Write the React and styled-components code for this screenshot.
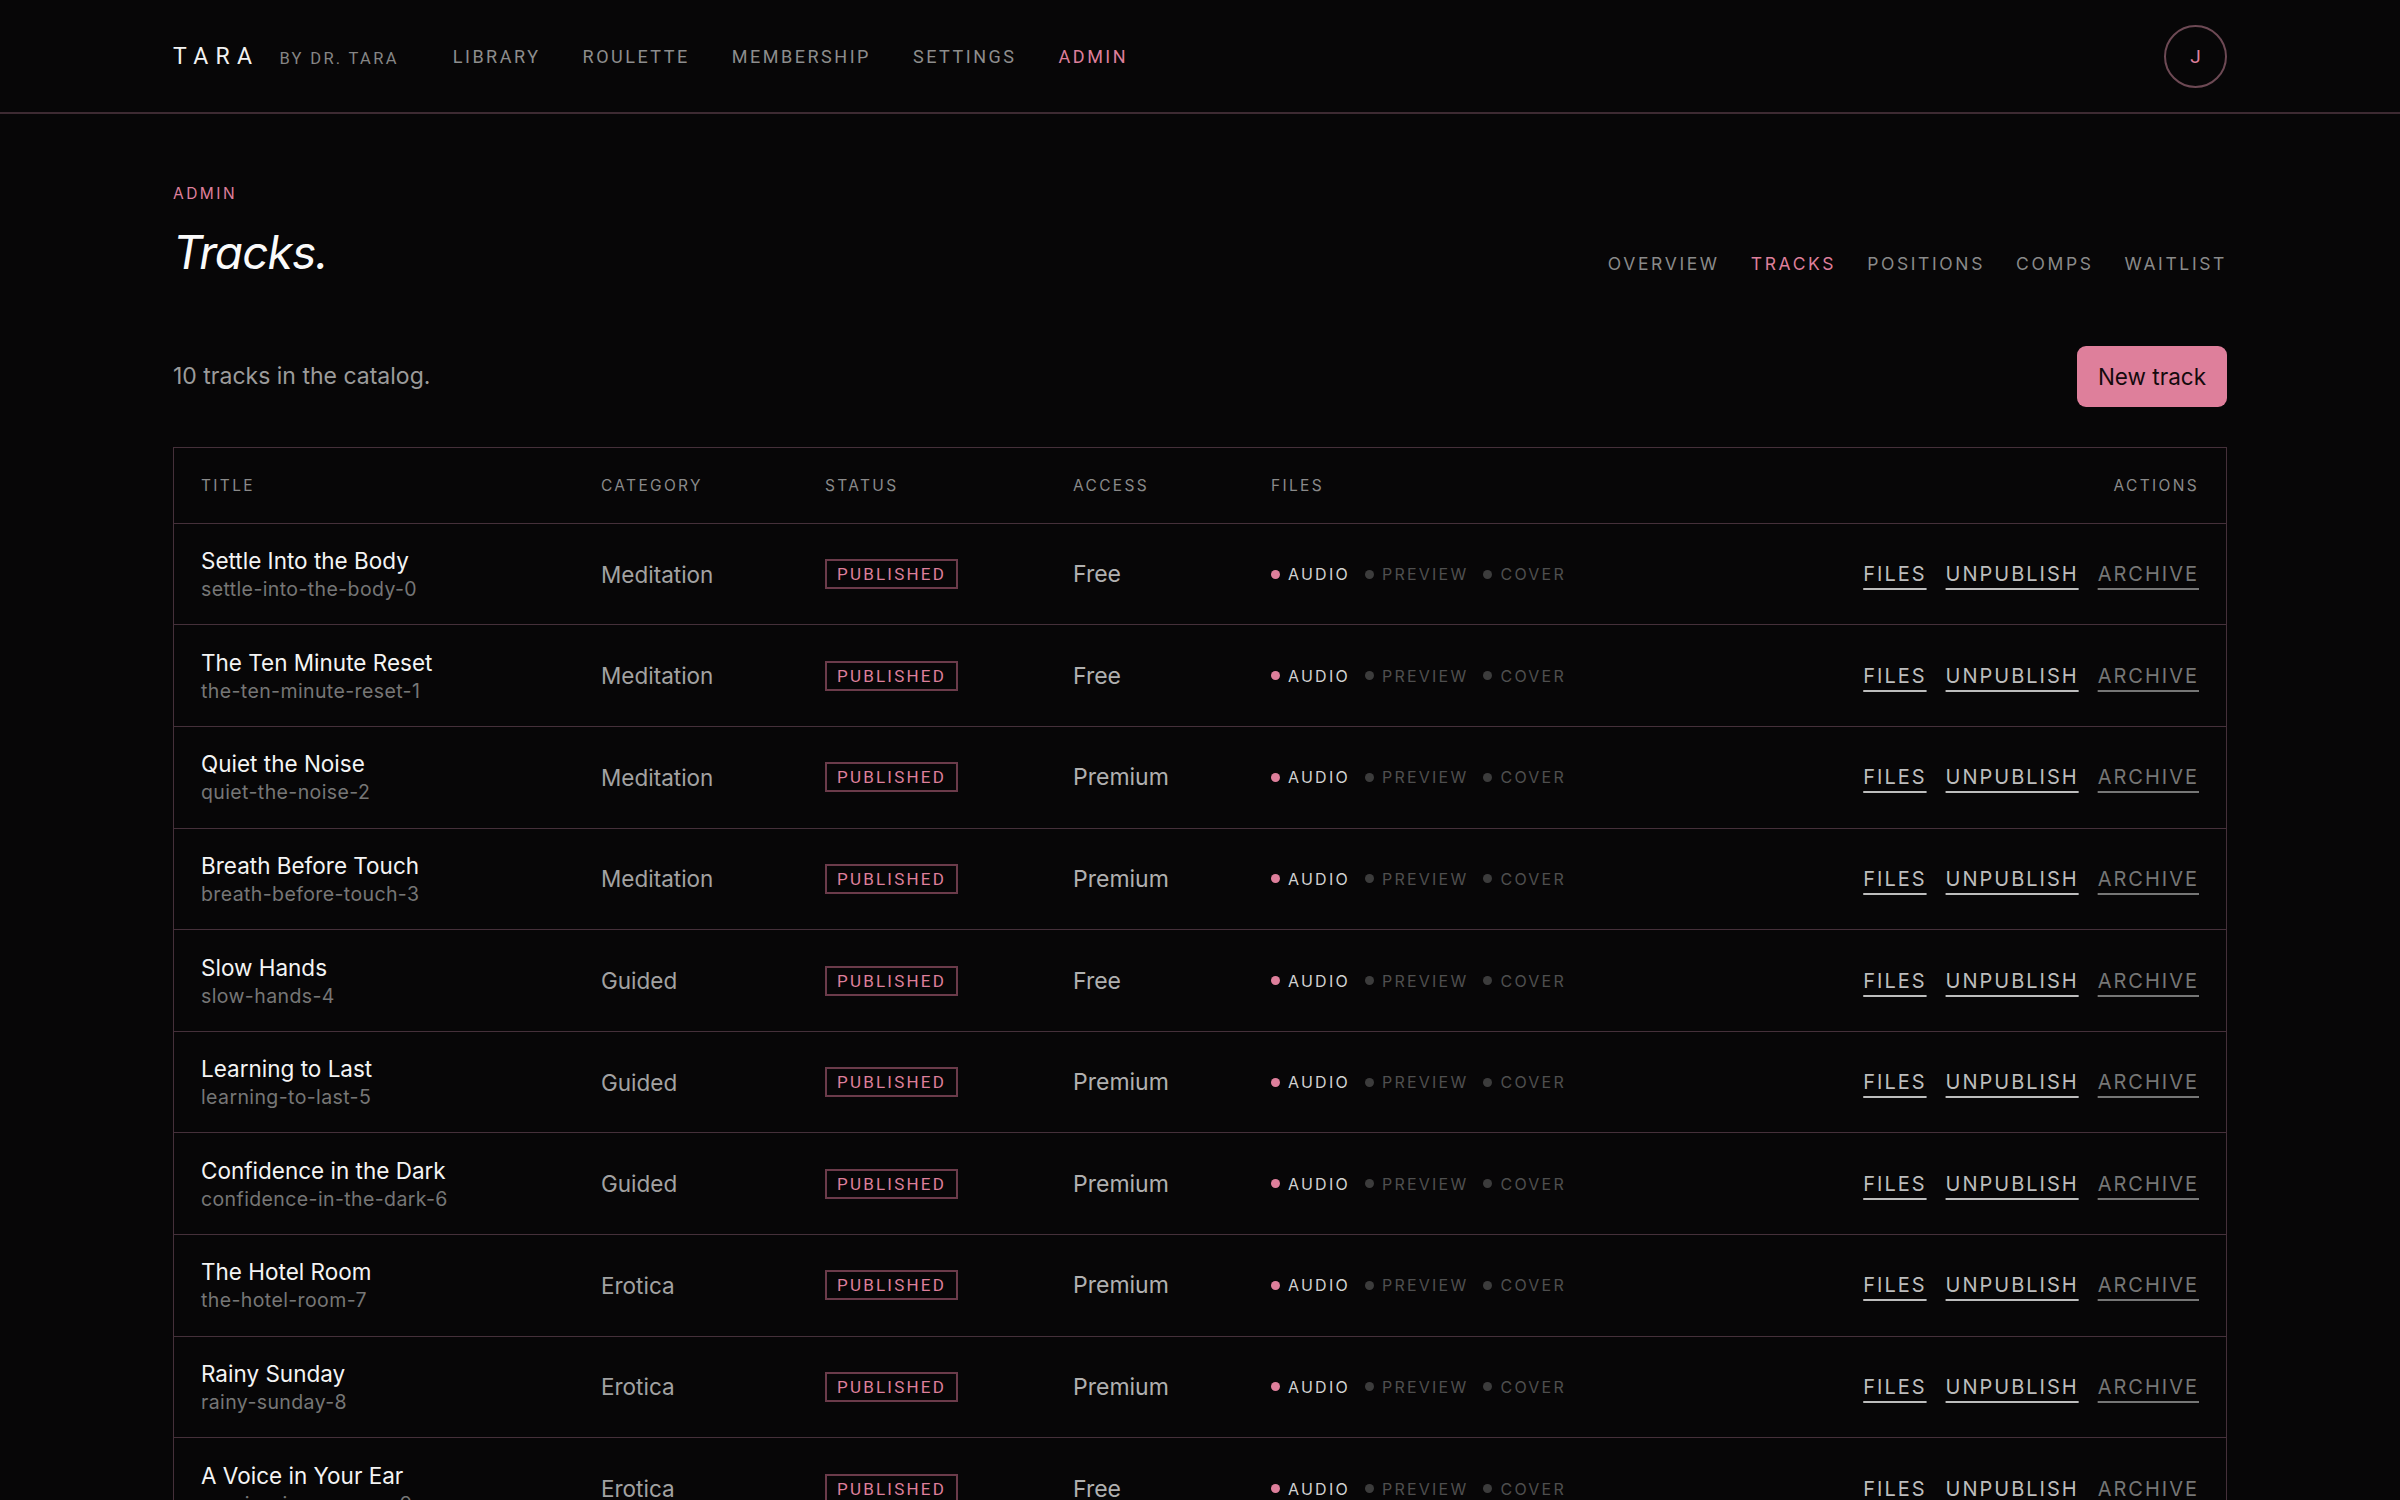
import styled, { createGlobalStyle } from "styled-components";

const GlobalStyle = createGlobalStyle`
  html, body {
    margin: 0;
    padding: 0;
    background: #070607;
    color: #eee;
    font-family: Inter, "Noto Sans", sans-serif;
  }
  * { box-sizing: border-box; }
`;

const tracks = [
  { title: "Settle Into the Body", slug: "settle-into-the-body-0", category: "Meditation", access: "Free" },
  { title: "The Ten Minute Reset", slug: "the-ten-minute-reset-1", category: "Meditation", access: "Free" },
  { title: "Quiet the Noise", slug: "quiet-the-noise-2", category: "Meditation", access: "Premium" },
  { title: "Breath Before Touch", slug: "breath-before-touch-3", category: "Meditation", access: "Premium" },
  { title: "Slow Hands", slug: "slow-hands-4", category: "Guided", access: "Free" },
  { title: "Learning to Last", slug: "learning-to-last-5", category: "Guided", access: "Premium" },
  { title: "Confidence in the Dark", slug: "confidence-in-the-dark-6", category: "Guided", access: "Premium" },
  { title: "The Hotel Room", slug: "the-hotel-room-7", category: "Erotica", access: "Premium" },
  { title: "Rainy Sunday", slug: "rainy-sunday-8", category: "Erotica", access: "Premium" },
  { title: "A Voice in Your Ear", slug: "a-voice-in-your-ear-9", category: "Erotica", access: "Free" },
];

const PINK = "#de7f9b";
const LINE = "#45303a";

const TopBar = styled.header`
  height: 114px;
  border-bottom: 2px solid #3d2a32;
`;

const Wrap = styled.div`
  max-width: 2054px;
  margin: 0 auto;
  height: 100%;
  display: flex;
  align-items: center;
`;

const Brand = styled.div`
  display: flex;
  align-items: baseline;
  gap: 20px;
  font-family: Roboto, sans-serif;
`;

const Logo = styled.span`
  font-size: 23px;
  letter-spacing: 0.32em;
  color: #f2f2f2;
`;

const ByLine = styled.span`
  font-size: 16.5px;
  letter-spacing: 0.14em;
  color: #858585;
`;

const MainNav = styled.nav`
  display: flex;
  gap: 42px;
  margin-left: 54px;
  font-family: Roboto, sans-serif;
`;

const NavLink = styled.a`
  font-size: 18px;
  letter-spacing: 0.14em;
  color: ${p => (p.$active ? PINK : "#8d8d8d")};
  text-decoration: none;
`;

const Avatar = styled.div`
  margin-left: auto;
  width: 63px;
  height: 63px;
  border-radius: 50%;
  border: 2px solid #6d4954;
  display: flex;
  align-items: center;
  justify-content: center;
  color: ${PINK};
  font-size: 19px;
  font-family: Roboto, sans-serif;
`;

const Page = styled.main`
  max-width: 2054px;
  margin: 0 auto;
  padding-top: 70px;
`;

const HeadRow = styled.div`
  display: flex;
  align-items: flex-end;
  justify-content: space-between;
`;

const Eyebrow = styled.div`
  font-size: 15.5px;
  letter-spacing: 0.16em;
  color: ${PINK};
`;

const Heading = styled.h1`
  margin: 23px 0 0;
  font-size: 46px;
  font-style: italic;
  font-weight: 400;
  letter-spacing: -0.02em;
  color: #fafafa;
  line-height: 1.15;
`;

const SubNav = styled.nav`
  display: flex;
  gap: 31px;
  padding-bottom: 5px;
`;

const SubLink = styled.a`
  font-size: 17.5px;
  letter-spacing: 0.15em;
  color: ${p => (p.$active ? PINK : "#8a8a8a")};
  text-decoration: none;
`;

const Toolbar = styled.div`
  display: flex;
  align-items: center;
  justify-content: space-between;
  margin-top: 67px;
`;

const Count = styled.p`
  margin: 0;
  font-size: 23px;
  color: #9b9b9b;
`;

const PrimaryButton = styled.button`
  height: 61px;
  padding: 0 21px;
  border: none;
  border-radius: 9px;
  background: ${PINK};
  color: #140a0d;
  font-family: Inter, sans-serif;
  font-size: 22.5px;
`;

const Table = styled.div`
  margin-top: 40px;
  border: 1px solid ${LINE};
`;

const Row = styled.div`
  display: grid;
  grid-template-columns: 400px 224px 248px 198px 1fr auto;
  align-items: center;
  padding: 0 27px;
  height: ${p => (p.$head ? "75px" : "101.6px")};
  border-top: ${p => (p.$head ? "none" : `1px solid ${LINE}`)};
`;

const HeadCell = styled.div`
  font-size: 15.5px;
  letter-spacing: 0.15em;
  color: #8a8a8a;
  text-align: ${p => (p.$right ? "right" : "left")};
`;

const TitleCell = styled.div`
  display: flex;
  flex-direction: column;
  gap: 3px;
`;

const TrackName = styled.span`
  font-size: 22.5px;
  color: #f4f4f4;
`;

const Slug = styled.span`
  font-size: 19.5px;
  letter-spacing: 0.02em;
  color: #767676;
`;

const Category = styled.span`
  font-size: 22.5px;
  color: #a2a2a2;
`;

const Badge = styled.span`
  justify-self: start;
  padding: 3px 10px;
  border: 2px solid #6b3b4a;
  color: ${PINK};
  font-family: Roboto, sans-serif;
  font-size: 17px;
  letter-spacing: 0.13em;
`;

const Access = styled.span`
  font-size: 23px;
  color: #b0b0b0;
`;

const Files = styled.div`
  display: flex;
  align-items: center;
  gap: 15px;
`;

const FileTag = styled.span`
  display: flex;
  align-items: center;
  gap: 8px;
  font-size: 16px;
  letter-spacing: 0.14em;
  color: ${p => (p.$on ? "#d2d2d2" : "#4f4f4f")};
  &::before {
    content: "";
    width: 9px;
    height: 9px;
    border-radius: 50%;
    background: ${p => (p.$on ? PINK : "#3c3c3c")};
  }
`;

const Actions = styled.div`
  display: flex;
  gap: 19px;
  justify-content: flex-end;
`;

const ActionLink = styled.a`
  font-size: 20px;
  letter-spacing: 0.1em;
  color: ${p => (p.$muted ? "#767676" : "#bdbdbd")};
  text-decoration: underline;
  text-decoration-thickness: 2px;
  text-underline-offset: 7px;
`;

export default function App() {
  return (
    <>
      <GlobalStyle />
      <TopBar>
        <Wrap>
          <Brand>
            <Logo>TARA</Logo>
            <ByLine>BY DR. TARA</ByLine>
          </Brand>
          <MainNav>
            <NavLink>LIBRARY</NavLink>
            <NavLink>ROULETTE</NavLink>
            <NavLink>MEMBERSHIP</NavLink>
            <NavLink>SETTINGS</NavLink>
            <NavLink $active>ADMIN</NavLink>
          </MainNav>
          <Avatar>J</Avatar>
        </Wrap>
      </TopBar>
      <Page>
        <HeadRow>
          <div>
            <Eyebrow>ADMIN</Eyebrow>
            <Heading>Tracks.</Heading>
          </div>
          <SubNav>
            <SubLink>OVERVIEW</SubLink>
            <SubLink $active>TRACKS</SubLink>
            <SubLink>POSITIONS</SubLink>
            <SubLink>COMPS</SubLink>
            <SubLink>WAITLIST</SubLink>
          </SubNav>
        </HeadRow>
        <Toolbar>
          <Count>10 tracks in the catalog.</Count>
          <PrimaryButton>New track</PrimaryButton>
        </Toolbar>
        <Table>
          <Row $head>
            <HeadCell>TITLE</HeadCell>
            <HeadCell>CATEGORY</HeadCell>
            <HeadCell>STATUS</HeadCell>
            <HeadCell>ACCESS</HeadCell>
            <HeadCell>FILES</HeadCell>
            <HeadCell $right>ACTIONS</HeadCell>
          </Row>
          {tracks.map(t => (
            <Row key={t.slug}>
              <TitleCell>
                <TrackName>{t.title}</TrackName>
                <Slug>{t.slug}</Slug>
              </TitleCell>
              <Category>{t.category}</Category>
              <Badge>PUBLISHED</Badge>
              <Access>{t.access}</Access>
              <Files>
                <FileTag $on>AUDIO</FileTag>
                <FileTag>PREVIEW</FileTag>
                <FileTag>COVER</FileTag>
              </Files>
              <Actions>
                <ActionLink>FILES</ActionLink>
                <ActionLink>UNPUBLISH</ActionLink>
                <ActionLink $muted>ARCHIVE</ActionLink>
              </Actions>
            </Row>
          ))}
        </Table>
      </Page>
    </>
  );
}
